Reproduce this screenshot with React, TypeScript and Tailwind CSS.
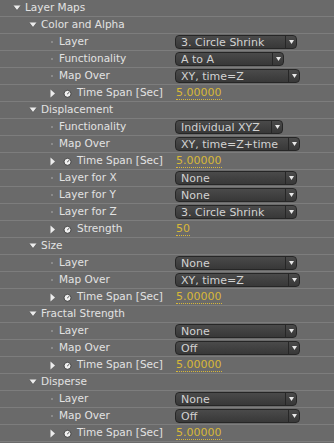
import type { ReactNode } from 'react';

// Row types for the effect controls panel
type RowKind = 'group' | 'menu' | 'value';

interface PanelRow {
  kind: RowKind;
  label: string;
  level?: number; // only for groups
  value?: string;
  menuWidth?: string;
}

const ROWS: PanelRow[] = [
  { kind: 'group', label: 'Layer Maps', level: 0 },
  { kind: 'group', label: 'Color and Alpha', level: 1 },
  { kind: 'menu', label: 'Layer', value: '3. Circle Shrink', menuWidth: 'w-[122px]' },
  { kind: 'menu', label: 'Functionality', value: 'A to A', menuWidth: 'w-[109px]' },
  { kind: 'menu', label: 'Map Over', value: 'XY, time=Z', menuWidth: 'w-[125px]' },
  { kind: 'value', label: 'Time Span [Sec]', value: '5.00000' },
  { kind: 'group', label: 'Displacement', level: 1 },
  { kind: 'menu', label: 'Functionality', value: 'Individual XYZ', menuWidth: 'w-[108px]' },
  { kind: 'menu', label: 'Map Over', value: 'XY, time=Z+time', menuWidth: 'w-[125px]' },
  { kind: 'value', label: 'Time Span [Sec]', value: '5.00000' },
  { kind: 'menu', label: 'Layer for X', value: 'None', menuWidth: 'w-[122px]' },
  { kind: 'menu', label: 'Layer for Y', value: 'None', menuWidth: 'w-[122px]' },
  { kind: 'menu', label: 'Layer for Z', value: '3. Circle Shrink', menuWidth: 'w-[122px]' },
  { kind: 'value', label: 'Strength', value: '50' },
  { kind: 'group', label: 'Size', level: 1 },
  { kind: 'menu', label: 'Layer', value: 'None', menuWidth: 'w-[122px]' },
  { kind: 'menu', label: 'Map Over', value: 'XY, time=Z', menuWidth: 'w-[125px]' },
  { kind: 'value', label: 'Time Span [Sec]', value: '5.00000' },
  { kind: 'group', label: 'Fractal Strength', level: 1 },
  { kind: 'menu', label: 'Layer', value: 'None', menuWidth: 'w-[122px]' },
  { kind: 'menu', label: 'Map Over', value: 'Off', menuWidth: 'w-[125px]' },
  { kind: 'value', label: 'Time Span [Sec]', value: '5.00000' },
  { kind: 'group', label: 'Disperse', level: 1 },
  { kind: 'menu', label: 'Layer', value: 'None', menuWidth: 'w-[122px]' },
  { kind: 'menu', label: 'Map Over', value: 'Off', menuWidth: 'w-[125px]' },
  { kind: 'value', label: 'Time Span [Sec]', value: '5.00000' },
];

function DownTriangle() {
  return (
    <svg width="8" height="6" viewBox="0 0 8 6" className="shrink-0">
      <path d="M0.5 1.1 L7.5 1.1 L4 5.6 Z" fill="#2a2a2a" opacity="0.5" />
      <path d="M0.5 0.5 L7.5 0.5 L4 5 Z" fill="#ececec" />
    </svg>
  );
}

function RightTriangle() {
  return (
    <svg width="6" height="9" viewBox="0 0 6 9" className="shrink-0">
      <path d="M0.5 0.5 L5 4.5 L0.5 8.5 Z" fill="#ededed" />
    </svg>
  );
}

// little stopwatch used on animatable params
function Stopwatch() {
  return (
    <svg width="9" height="9" viewBox="0 0 9 9" className="shrink-0">
      <circle cx="4.5" cy="4.8" r="3.5" fill="#f0f0f0" stroke="#3c3c3c" strokeWidth="0.9" />
      <path d="M4.5 4.8 L6.2 3.3" stroke="#4a4a4a" strokeWidth="1" strokeLinecap="round" />
    </svg>
  );
}

function Bullet() {
  return <div className="h-[2px] w-[2px] shrink-0 bg-[#8a8a8a]" />;
}

function PopupMenu({ value, width }: { value: string; width: string }) {
  return (
    <div
      className={`flex h-[14px] ${width} items-stretch overflow-hidden rounded-[4px] border border-[#262626] bg-gradient-to-b from-[#4a4a4a] to-[#383838]`}>
      <div className="flex flex-1 items-center pl-[5px] text-[11px] leading-none text-[#d2d2d2]">{value}</div>
      <div className="flex w-[11px] items-center justify-center border-l border-[#262626]">
        <svg width="5" height="4" viewBox="0 0 5 4">
          <path d="M0 0 L5 0 L2.5 4 Z" fill="#e8e8e8" />
        </svg>
      </div>
    </div>
  );
}

function LabelCell({ row }: { row: PanelRow }): ReactNode {
  if (row.kind === 'group') {
    const indent = row.level === 0 ? 'pl-[13px]' : 'pl-[29px]';
    return (
      <div className={`flex items-center gap-[4px] ${indent}`}>
        <DownTriangle />
        <span>{row.label}</span>
      </div>
    );
  }

  if (row.kind === 'value') {
    return (
      <div className="flex items-center pl-[50px]">
        <RightTriangle />
        <div className="ml-[7px]">
          <Stopwatch />
        </div>
        <span className="ml-[5px]">{row.label}</span>
      </div>
    );
  }

  return (
    <div className="flex items-center pl-[51px]">
      <Bullet />
      <span className="ml-[6px]">{row.label}</span>
    </div>
  );
}

function Row({ row }: { row: PanelRow }) {
  return (
    <div className="flex h-[17px] items-center border-b border-[#7d7d7d]">
      <div className="w-[175px] shrink-0 text-[10.5px]">
        <LabelCell row={row} />
      </div>
      <div className="flex flex-1 items-center">
        {row.kind === 'menu' && <PopupMenu value={row.value!} width={row.menuWidth!} />}
        {row.kind === 'value' && (
          <span className="ml-[1px] border-b border-dotted border-[#d8b838] text-[11px] leading-[12px] text-[#d8b838]">
            {row.value}
          </span>
        )}
      </div>
    </div>
  );
}

export default function App() {
  return (
    <div
      className="h-[443px] w-[334px] overflow-hidden bg-[#6a6a6a] text-[#e2e2e2]"
      style={{ fontFamily: '"DejaVu Sans", "Liberation Sans", sans-serif' }}>
      {ROWS.map((row, i) => (
        <Row key={`${row.label}-${i}`} row={row} />
      ))}
    </div>
  );
}
